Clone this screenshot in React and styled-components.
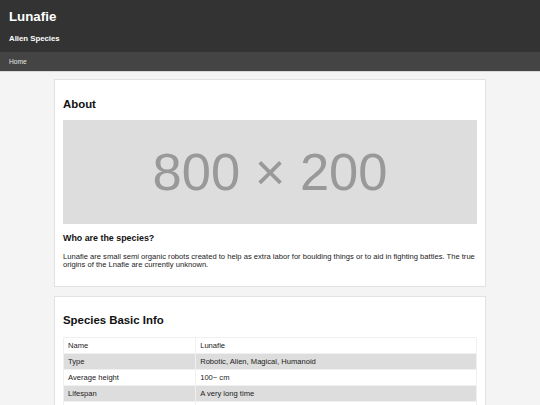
import React from "react";
import styled, { createGlobalStyle } from "styled-components";

const Global = createGlobalStyle`
  html, body { margin: 0; padding: 0; }
  body {
    background: #f4f4f4;
    font-family: "Liberation Sans", Arial, sans-serif;
    font-size: 7.6px;
    color: #222;
  }
`;

const Header = styled.header`
  background: #333333;
  color: #fff;
  padding: 9px 9px 9.4px;
`;

const Title = styled.h1`
  margin: 0 0 9.5px;
  font-size: 13.3px;
  font-weight: bold;
  line-height: 15.3px;
`;

const Subtitle = styled.div`
  font-size: 7.8px;
  font-weight: bold;
  line-height: 9px;
`;

const Nav = styled.nav`
  background: #444444;
  height: 19px;
  display: flex;
  align-items: center;
  padding: 0 9px;
  border-bottom: 1px solid #d8d8d8;
`;

const NavLink = styled.a`
  color: #e8e8e8;
  font-size: 6.6px;
  text-decoration: none;
  line-height: 8px;
`;

const Main = styled.main`
  width: 432px;
  margin: 7px auto 0;
  display: flex;
  flex-direction: column;
  gap: 9px;
`;

const Card = styled.section`
  background: #fff;
  border: 1px solid #e2e2e2;
  padding: 0 8px;
  display: flow-root;
`;

const H2Wrap = styled.div`
  padding-top: 8px;
`;

const Heading = styled.h2`
  font-size: 11.4px;
  font-weight: bold;
  margin: 9.5px 0;
  line-height: 13px;
  color: #111;
`;

const Placeholder = styled.div`
  height: 104px;
  background: #dddddd;
  color: #999999;
  display: flex;
  align-items: center;
  justify-content: center;
  font-size: 52.5px;
  line-height: 1;
`;

const H3 = styled.h3`
  font-size: 8.9px;
  font-weight: bold;
  margin: 9px 0;
  line-height: 10.4px;
  color: #111;
`;

const Para = styled.p`
  margin: 9px 0 7.6px;
  line-height: 8.8px;
  padding-bottom: 8px;
`;

const Table = styled.table`
  width: 100%;
  border-collapse: collapse;
  border: 1px solid #f0f0f0;
`;

const Row = styled.tr`
  background: ${(p) => (p.$shade ? "#dddddd" : "#ffffff")};
`;

const Cell = styled.td`
  padding: 0 4px;
  height: 15px;
  border: 1px solid #f0f0f0;
  font-size: 7.6px;
  line-height: 9px;
  color: #222;
  width: ${(p) => p.$w || "auto"};
`;

const rows = [
  ["Name", "Lunafie"],
  ["Type", "Robotic, Alien, Magical, Humanoid"],
  ["Average height", "100~ cm"],
  ["Lifespan", "A very long time"],
  ["Origin", "Unknown"],
];

export default function App() {
  return (
    <>
      <Global />
      <Header>
        <Title>Lunafie</Title>
        <Subtitle>Alien Species</Subtitle>
      </Header>
      <Nav>
        <NavLink href="#">Home</NavLink>
      </Nav>
      <Main>
        <Card>
          <H2Wrap>
            <Heading>About</Heading>
          </H2Wrap>
          <Placeholder>800 × 200</Placeholder>
          <H3>Who are the species?</H3>
          <Para>
            Lunafie are small semi organic robots created to help as extra labor for boulding things or to aid in fighting battles. The true origins of the Lnafie are currently unknown.
          </Para>
        </Card>
        <Card>
          <H2Wrap>
            <Heading>Species Basic Info</Heading>
          </H2Wrap>
          <Table>
            <tbody>
              {rows.map((r, i) => (
                <Row key={r[0]} $shade={i % 2 === 1}>
                  <Cell $w="32%">{r[0]}</Cell>
                  <Cell>{r[1]}</Cell>
                </Row>
              ))}
            </tbody>
          </Table>
        </Card>
      </Main>
    </>
  );
}
